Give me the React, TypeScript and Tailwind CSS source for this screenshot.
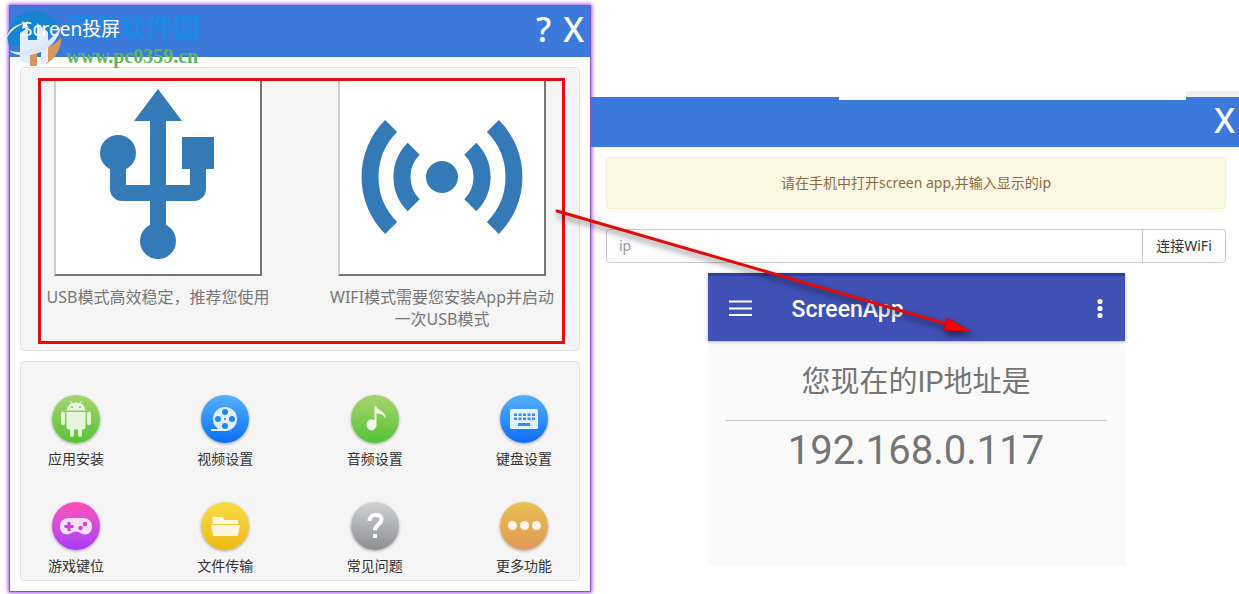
import clsx from "clsx";
import type { ReactNode } from "react";

const FONT = "font-['Noto_Sans','Noto_Sans_CJK_SC',sans-serif]";

type FeatureProps = {
  label: string,
  gradient: string,
  children: ReactNode,
}

function Feature({ label, gradient, children }: FeatureProps) {
  return (
    <button type="button" className="flex flex-col items-center gap-1.5 w-14 text-sm/5 text-[#333]">
      <span className={clsx("block size-12 rounded-full bg-linear-to-b shadow-[0_1px_3px_rgba(0,0,0,0.35)]", gradient)}>
        <svg viewBox="0 0 48 48" className="size-12" fill="#fff" aria-hidden="true">
          {children}
        </svg>
      </span>
      <span className="whitespace-nowrap">{label}</span>
    </button>
  )
}

function AndroidIcon() {
  return (
    <g fillOpacity="0.8">
      <path d="M14.500 15.500a9.500 8 0 0 1 19 0z" />
      <path d="M18.500 6l2 3.500M29.500 6l-2 3.500" stroke="#fff" strokeOpacity="0.8" strokeLinecap="round" />
      <circle cx="20" cy="12" r="1" fill="#7ec251" fillOpacity="1" />
      <circle cx="28" cy="12" r="1" fill="#7ec251" fillOpacity="1" />
      <path d="M14.500 17h19v15a2.500 2.500 0 0 1-2.500 2.500h-1V40a2 2 0 0 1-4 0v-5.500h-4V40a2 2 0 0 1-4 0v-5.500h-1a2.500 2.500 0 0 1-2.500-2.500z" />
      <rect x="9" y="16.500" width="4" height="13.500" rx="2" />
      <rect x="35" y="16.500" width="4" height="13.500" rx="2" />
    </g>
  )
}

function ReelIcon() {
  return (
    <g>
      <circle cx="24" cy="24" r="12" fillOpacity="0.85" />
      <path d="M10 34h15v2H10z" fillOpacity="0.9" />
      <g fill="#2187f7">
        <circle cx="24" cy="17" r="3" />
        <circle cx="24" cy="31" r="3" />
        <circle cx="17" cy="24" r="3" />
        <circle cx="31" cy="24" r="3" />
        <circle cx="24" cy="24" r="1" />
      </g>
    </g>
  )
}

function NoteIcon() {
  return (
    <g fillOpacity="0.88">
      <path d="M23.500 11h1.500c2 5 9 4 10 13-3-5-6-5.500-9.500-5.500V30a5 5.500 0 1 1-2-4.500z" />
    </g>
  )
}

function KeyboardIcon() {
  const keys = [14, 18.500, 23, 27.500, 32];
  return (
    <g>
      <rect x="10" y="14" width="28" height="20" rx="1.500" fillOpacity="0.88" />
      <g fill="#2f8ef7">
        {keys.map((x) => <rect key={x} x={x} y="18.500" width="3" height="2.500" />)}
        {keys.map((x) => <rect key={x} x={x} y="22.500" width="3" height="2.500" />)}
        <rect x="18" y="28" width="12" height="3" />
      </g>
    </g>
  )
}

function GamepadIcon() {
  return (
    <g>
      <path
        d="M16 16h16a8 8 0 0 1 8 8.500c0 5-3 8-7 8-4 0-5-3-9-3s-5 3-9 3c-4 0-7-3-7-8A8 8 0 0 1 16 16z"
        fillOpacity="0.82"
      />
      <g fill="#d040dc">
        <path d="M15.500 20h3v3h3v3h-3v3h-3v-3h-3v-3h3z" />
        <circle cx="33" cy="22" r="2.200" />
        <circle cx="28.500" cy="26" r="2.200" />
      </g>
    </g>
  )
}

function FolderIcon() {
  return (
    <g fillOpacity="0.85">
      <path d="M12 15h10l1 3h13a1 1 0 0 1 1 1v3H11.500v-6z" />
      <path d="M10 23h29l-2 10a1 1 0 0 1-1 1H13a1 1 0 0 1-1-1z" />
    </g>
  )
}

function HelpIcon() {
  return (
    <g>
      <path d="M18.500 19c0-8 12-8 12-1.500 0 4.500-6.500 5-6.500 11" fill="none" stroke="#fff" strokeWidth="4" />
      <rect x="22" y="32" width="4" height="4" />
    </g>
  )
}

function DotsIcon() {
  return (
    <g fillOpacity="0.88">
      <circle cx="12.500" cy="23.500" r="4.500" />
      <circle cx="24.500" cy="23.500" r="4.500" />
      <circle cx="36.500" cy="23.500" r="4.500" />
    </g>
  )
}

function UsbIcon() {
  return (
    <svg viewBox="0 0 204 192" className="w-full" fill="#337ab7" aria-hidden="true">
      <path d="M102 7l24 32h-16v64h24V87h-8V55h32v32h-8v20a12 12 0 0 1-12 12h-28v30H94v-30H66a12 12 0 0 1-12-12V83h16v20h24V39H78z" />
      <circle cx="62" cy="71" r="18" />
      <circle cx="102" cy="159" r="18" />
    </svg>
  )
}

function SignalIcon() {
  return (
    <svg viewBox="0 0 204 192" className="w-full" fill="none" stroke="#337ab7" strokeWidth="17" aria-hidden="true">
      <circle cx="102" cy="95" r="16" fill="#337ab7" stroke="none" />
      <path d="M73.700 66.700a40 40 0 0 0 0 56.600M130.300 66.700a40 40 0 0 1 0 56.600" />
      <path d="M51.100 44.100a72 72 0 0 0 0 101.800M152.900 44.100a72 72 0 0 1 0 101.800" />
    </svg>
  )
}

type ModeProps = {
  icon: ReactNode,
  children: ReactNode,
}

function Mode({ icon, children }: ModeProps) {
  return (
    <div className="flex flex-col items-center gap-2.5 w-[232px]">
      <button
        type="button"
        className="w-[208px] h-[195px] bg-white border-2 border-t-0 border-l-[#ccc] border-r-[#767676] border-b-[#767676]"
      >
        {icon}
      </button>
      <p className="text-base/[22px] text-[#777] text-center whitespace-nowrap">{children}</p>
    </div>
  )
}

function Watermark() {
  return (
    <div className="absolute left-1 top-2.5 flex items-start gap-1 pointer-events-none">
      <svg width="58" height="58" viewBox="0 0 58 58" aria-hidden="true">
        <path d="M3 26C6 10 17 1 30 1c11 0 20 6 25 15L30 36H5z" fill="#1784cf" />
        <path d="M57 27c1 11-6 22-15 27V38c7-3 12-6 15-11zM26 43l7-1v14h-7z" fill="#d8975f" />
        <path d="M16 23l8-5v12h9V13l11 9v30l-7 3V37l-11 3v14l-10-3z" fill="#e4edfb" />
        <path d="M24 12C9 17 0 27 2 36c3 12 40 6 55-20-3 21-25 32-42 29C-4 42-4 16 24 12z" fill="#dde7fa" />
        <path d="M18 11l3 2 3-2-1 4 2 3-4-1-3 2 1-4z" fill="#fff" />
      </svg>
      <div className="flex flex-col font-bold">
        <span className="text-[27px]/[36px] text-[#1e88e5]">河东软件园</span>
        <span className="font-['Liberation_Serif',serif] text-xl/5 text-[#5cb85c]">www.pc0359.cn</span>
      </div>
    </div>
  )
}

function MainWindow() {
  return (
    <section className="mt-[5px] mb-0.5 bg-white border border-[#8f4fc8] shadow-[0_0_4px_1px_#a050e8]">
      <header className="flex items-center justify-between h-[51px] pl-3 pr-1.5 pb-1 bg-[#3b7adb] text-white">
        <h1 className="relative z-10 text-[19px]">Screen投屏</h1>
        <div className="flex gap-3 text-[34px]/[47px] font-medium">
          <button type="button">?</button>
          <button type="button">X</button>
        </div>
      </header>

      <div className="flex flex-col gap-2.5 p-2.5">
        <div className="pl-[17px] pr-3.5 pt-2.5 pb-1.5 bg-[#f5f5f5] border border-[#e3e3e3] rounded">
          <div className="h-[266px] border-3 border-[#e20d0d]">
            <div className="flex justify-between pl-px pr-1">
              <Mode icon={<UsbIcon />}>USB模式高效稳定，推荐您使用</Mode>
              <Mode icon={<SignalIcon />}>WIFI模式需要您安装App并启动<br />一次USB模式</Mode>
            </div>
          </div>
        </div>

        <div className="flex flex-col gap-[33px] px-[27px] pt-[33px] pb-1 bg-[#f5f5f5] border border-[#e3e3e3] rounded">
          <div className="flex justify-between">
            <Feature label="应用安装" gradient="from-[#a5d46e] to-[#52c234]"><AndroidIcon /></Feature>
            <Feature label="视频设置" gradient="from-[#52b1fb] to-[#0a6cf5]"><ReelIcon /></Feature>
            <Feature label="音频设置" gradient="from-[#a5d46e] to-[#52c234]"><NoteIcon /></Feature>
            <Feature label="键盘设置" gradient="from-[#52b1fb] to-[#0a6cf5]"><KeyboardIcon /></Feature>
          </div>
          <div className="flex justify-between">
            <Feature label="游戏键位" gradient="from-[#ff4fb5] to-[#a838fb]"><GamepadIcon /></Feature>
            <Feature label="文件传输" gradient="from-[#fbdc45] to-[#edb90b]"><FolderIcon /></Feature>
            <Feature label="常见问题" gradient="from-[#d2d3d5] to-[#8d8e92]"><HelpIcon /></Feature>
            <Feature label="更多功能" gradient="from-[#e8c052] to-[#e09856]"><DotsIcon /></Feature>
          </div>
        </div>
      </div>
    </section>
  )
}

function PhoneScreen() {
  return (
    <div className="w-[417px] h-[293px] mx-auto bg-[#fafafa] font-['Roboto','Noto_Sans_CJK_SC',sans-serif] text-[#757575]">
      <div className="flex items-center h-17 px-5 border-t-3 border-[#303f9f] bg-[#3f51b5] text-white shadow-[0_1px_3px_rgba(0,0,0,0.3)]">
        <button type="button" aria-label="Menu">
          <svg width="24" height="24" viewBox="0 0 24 24" fill="#fff">
            <path d="M1 3.500h23v2H1zM1 10.500h23v2H1zM1 17h23v2H1z" />
          </svg>
        </button>
        <h2 className="ml-10 pt-1 text-[23px] font-medium">ScreenApp</h2>
        <button type="button" aria-label="More" className="ml-auto">
          <svg width="10" height="24" viewBox="0 0 10 24" fill="#fff">
            <circle cx="5" cy="4.500" r="2.600" />
            <circle cx="5" cy="11.500" r="2.600" />
            <circle cx="5" cy="18.500" r="2.600" />
          </svg>
        </button>
      </div>
      <div className="px-[18px] text-center">
        <p className="h-20 text-[29px]/[82px] border-b border-[#c4c4c4]">您现在的IP地址是</p>
        <p className="text-[40px]/[60px]">192.168.0.117</p>
      </div>
    </div>
  )
}

function WifiWindow() {
  return (
    <section className="relative mt-[91px] self-start">
      <div className="grid grid-cols-[248fr_347fr_53fr] h-[9px]">
        <div className="mt-1.5 bg-[#3b7adb]" />
        <div />
        <div className="border-t-6 border-[#f0f0f0] bg-[#3b7adb]" />
      </div>
      <header className="flex items-center justify-end h-[47px] pr-1 bg-[#3b7adb] text-white text-[34px]/[40px] font-medium">
        <button type="button" className="pb-2">X</button>
      </header>
      <div className="pt-2.5 pl-[15px] pr-[13px]">
        <p className="h-[52px] bg-[#fcf8e3] border border-[#faebcc] rounded text-sm/[50px] text-center text-[#8a6d3b]">
          请在手机中打开screen app,并输入显示的ip
        </p>
        <form className="flex h-[34px] mt-5 mb-2.5 border border-[#ccc] rounded text-sm">
          <input
            type="text"
            placeholder="ip"
            aria-label="ip"
            className="flex-1 min-w-0 px-3 bg-white rounded-l placeholder:text-[#999]"
          />
          <button type="button" className="w-[83px] border-l border-[#ccc] text-[#333]">连接WiFi</button>
        </form>
        <PhoneScreen />
      </div>
    </section>
  )
}

// Points from the mode buttons to the phone's address screen
function PointerArrow() {
  return (
    <svg
      className="absolute left-[550px] top-[200px] drop-shadow-[2px_4px_3px_rgba(0,0,0,0.55)] pointer-events-none"
      width="430"
      height="145"
      viewBox="0 0 430 145"
      aria-hidden="true"
    >
      <path d="M7 11L397 124" stroke="#e00b0b" strokeWidth="3" strokeLinecap="round" />
      <path d="M397 118l23 13-27-1 3-5z" fill="#f50505" stroke="#d00" />
    </svg>
  )
}

export default function App() {
  return (
    <main className={clsx("relative grid grid-cols-[582fr_648fr] pl-[9px] bg-white overflow-hidden", FONT)}>
      <MainWindow />
      <WifiWindow />
      <Watermark />
      <PointerArrow />
    </main>
  )
}
